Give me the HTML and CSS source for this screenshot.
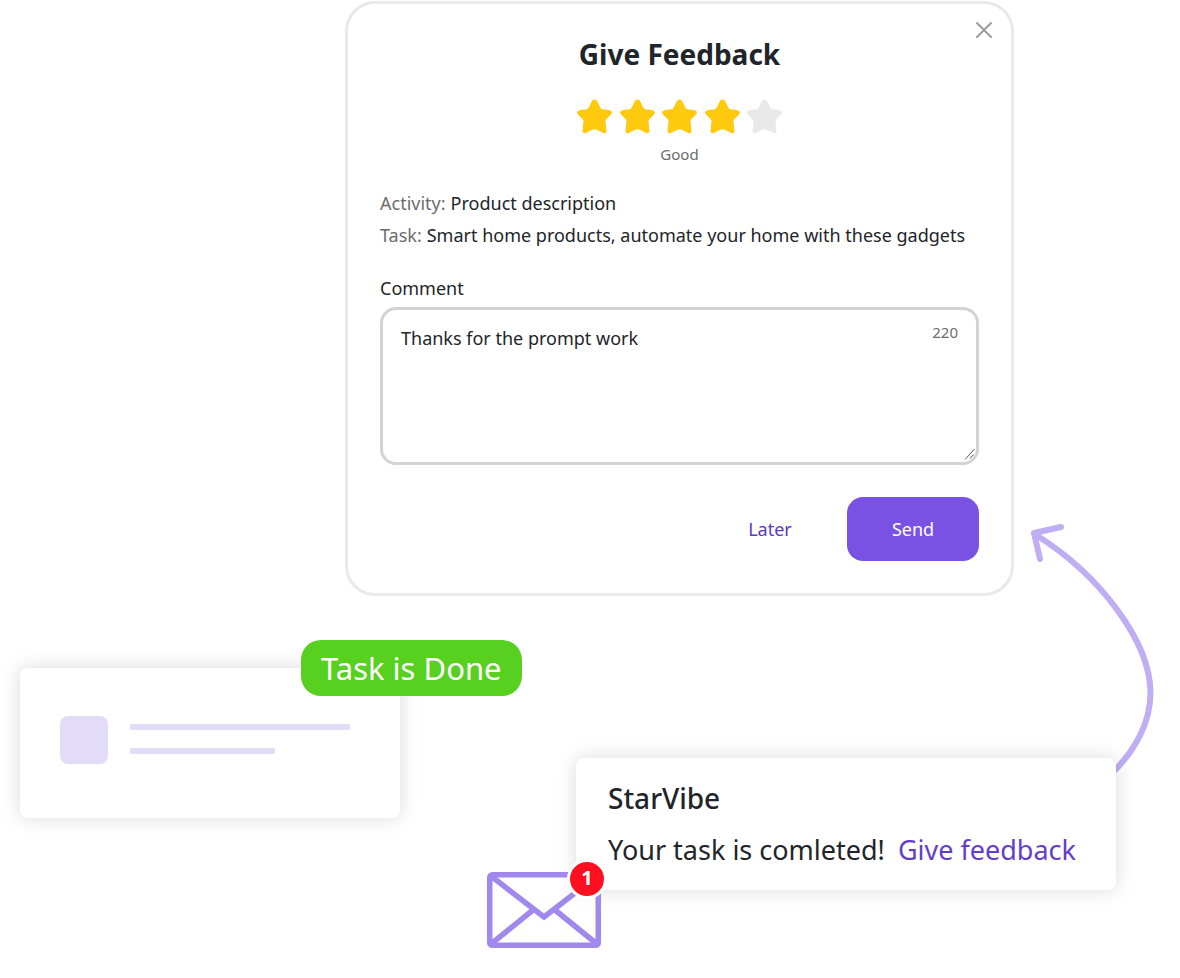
FILE: index.html
```html
<!DOCTYPE html>
<html lang="en">
<head>
<meta charset="utf-8">
<meta name="viewport" content="width=device-width, initial-scale=1">
<title>Give Feedback</title>
<link rel="stylesheet" href="styles.css">
</head>
<body>
<svg class="defs" aria-hidden="true">
  <symbol id="star" viewBox="0 0 35 35">
    <path d="M17.5 .5Q19.3 .5 20.3 2.500L23.6 8.900Q24.200 10 25.600 10.200L32.500 11.200Q36.400 12.200 34 15.400L29 20.600Q28.300 21.400 28.500 22.600L29.500 31.500Q29.500 35 26.300 34L19 30.600Q17.500 29.900 16 30.600L8.700 34Q5.500 35 5.500 31.500L6.500 22.600Q6.700 21.400 6 20.600L1 15.400Q-1.400 12.200 2.500 11.200L9.400 10.200Q10.800 10 11.400 8.900L14.700 2.500Q15.700 .5 17.500 .5Z"/>
  </symbol>
</svg>
<main class="scene">
  <section class="modal" role="dialog" aria-labelledby="modal-title">
    <button class="close" type="button" aria-label="Close">
      <svg viewBox="0 0 18 18" width="18" height="18"><path d="M2 2L16 16M16 2L2 16"/></svg>
    </button>
    <h1 class="modal-title" id="modal-title">Give Feedback</h1>
    <form class="form">
      <fieldset class="rating">
        <legend class="hidden">Rating</legend>
        <div class="stars">
          <label class="star on"><input class="hidden" type="radio" name="rating" aria-label="Terrible"><svg><use href="#star"/></svg></label>
          <label class="star on"><input class="hidden" type="radio" name="rating" aria-label="Poor"><svg><use href="#star"/></svg></label>
          <label class="star on"><input class="hidden" type="radio" name="rating" aria-label="Fair"><svg><use href="#star"/></svg></label>
          <label class="star on"><input class="hidden" type="radio" name="rating" aria-label="Good" checked><svg><use href="#star"/></svg></label>
          <label class="star"><input class="hidden" type="radio" name="rating" aria-label="Excellent"><svg><use href="#star"/></svg></label>
        </div>
        <p class="rating-text">Good</p>
      </fieldset>
      <dl class="details">
        <div class="detail"><dt>Activity:</dt><dd>Product description</dd></div>
        <div class="detail"><dt>Task:</dt><dd>Smart home products, automate your home with these gadgets</dd></div>
      </dl>
      <label class="field-label" for="comment">Comment</label>
      <div class="field">
        <textarea class="comment" id="comment">Thanks for the prompt work</textarea>
        <span class="counter">220</span>
        <svg class="grip" viewBox="0 0 12 12" width="12" height="12" aria-hidden="true"><path d="M1 11.500L10.500 1M6 10.500L9.500 6.500"/></svg>
      </div>
      <div class="actions">
        <button class="button" type="button">Later</button>
        <button class="button primary" type="submit">Send</button>
      </div>
    </form>
  </section>

  <div class="events">
    <article class="task">
      <span class="task-status">Task is Done</span>
      <span class="task-thumb"></span>
      <div class="task-lines">
        <span class="line"></span>
        <span class="line short"></span>
      </div>
    </article>

    <div class="notice-wrap">
      <svg class="arrow" viewBox="0 0 128 256" width="128" height="256" aria-hidden="true">
        <path d="M6 15C70 55 120.500 122 120.500 173C120.500 202 105 231 82 253M31 7L4 13L10 39"/>
      </svg>
      <article class="notice">
        <h2 class="notice-title">StarVibe</h2>
        <p class="notice-text">Your task is comleted! <a class="link" href="#modal-title">Give feedback</a></p>
      </article>
      <div class="mail">
        <svg viewBox="0 0 114 76" width="114" height="76" aria-hidden="true">
          <rect x="2.750" y="2.750" width="108.500" height="70.500" rx="2.500"/>
          <path d="M4 4L57 45L110 4M4 72L46 38M110 72L68 38"/>
        </svg>
        <span class="count">1</span>
      </div>
    </div>
  </div>
</main>
</body>
</html>
```
FILE: styles.css
```css
* {
  box-sizing: border-box;
}

body {
  margin: 0;
  background: #fff;
  color: #212529;
  font-family: "Noto Sans", "Open Sans", sans-serif;
  font-size: 18px;
  line-height: 32px;
}

h1, h2, p, dl, dd, fieldset {
  margin: 0;
  padding: 0;
  border: 0;
}

button, textarea {
  font: inherit;
  color: inherit;
}

.defs {
  display: none;
}

.hidden {
  position: absolute;
  width: 1px;
  height: 1px;
  margin: 0;
  overflow: hidden;
  opacity: 0;
}

.scene {
  padding: 1px 64px 88px 20px;
}

.modal {
  position: relative;
  max-width: 669px;
  margin: 0 102px 0 auto;
  padding: 32px;
  border: 3px solid #e9e9e9;
  border-radius: 30px;
}

.close {
  position: absolute;
  top: 17px;
  right: 18px;
  display: flex;
  padding: 0;
  border: 0;
  background: none;
}

.close svg {
  fill: none;
  stroke: #9c9c9c;
  stroke-width: 2;
  stroke-linecap: round;
}

.modal-title {
  font-size: 28px;
  font-weight: 700;
  line-height: 36px;
  text-align: center;
}

.rating {
  display: flex;
  flex-direction: column;
  align-items: center;
  margin-top: 27px;
}

.stars {
  display: flex;
  justify-content: space-between;
  width: 205px;
}

.star {
  position: relative;
  display: flex;
}

.star svg {
  width: 35px;
  height: 35px;
  fill: #e9e9e9;
}

.star.on svg {
  fill: #ffc90e;
}

.rating-text {
  margin-top: 8px;
  color: #6c6c6c;
  font-size: 15px;
  line-height: 24px;
}

.details {
  margin-top: 21px;
}

.detail {
  display: flex;
  gap: 5px;
}

.detail dt {
  color: #6c6c6c;
}

.field-label {
  display: block;
  margin-top: 21px;
}

.field {
  position: relative;
  margin-top: 3px;
}

.comment {
  display: block;
  width: 100%;
  height: 158px;
  padding: 12px 80px 12px 18px;
  border: 3px solid #d3d3d3;
  border-radius: 16px;
  background: #fff;
  outline: 0;
  resize: vertical;
}

.comment::-webkit-resizer {
  background: transparent;
}

.grip {
  position: absolute;
  right: 3px;
  bottom: 5px;
  fill: none;
  stroke: #555;
  stroke-width: 1;
  pointer-events: none;
}

.counter {
  position: absolute;
  top: 13px;
  right: 21px;
  color: #6c6c6c;
  font-size: 15px;
  line-height: 24px;
}

.actions {
  display: flex;
  justify-content: flex-end;
  gap: 11px;
  margin-top: 32px;
}

.button {
  width: 132px;
  height: 64px;
  padding: 0;
  border: 0;
  border-radius: 16px;
  background: none;
  color: #5b39bf;
}

.button.primary {
  background: #7952e3;
  color: #fff;
}

.events {
  display: flex;
  justify-content: space-between;
  align-items: flex-start;
  gap: 40px;
  padding-top: 72px;
}

.task {
  position: relative;
  display: flex;
  align-items: flex-start;
  gap: 22px;
  flex: 0 1 380px;
  padding: 48px 50px 54px 40px;
  border-radius: 8px;
  background: #fff;
  box-shadow: 0 0 20px rgba(0, 0, 0, 0.15);
}

.task-status {
  position: absolute;
  top: -28px;
  left: 281px;
  padding: 8px 20px;
  border-radius: 20px;
  background: #58d01f;
  color: #fff;
  font-size: 31px;
  line-height: 40px;
  white-space: nowrap;
}

.task-thumb {
  flex: none;
  width: 48px;
  height: 48px;
  border-radius: 8px;
  background: #e2dcf9;
}

.task-lines {
  display: flex;
  flex: 1;
  flex-direction: column;
  gap: 18px;
  padding-top: 8px;
}

.line {
  height: 6px;
  border-radius: 2px;
  background: #e2dcf9;
}

.line.short {
  width: 66%;
}

.notice-wrap {
  position: relative;
  flex: 0 1 540px;
  margin-top: 90px;
}

.arrow {
  position: absolute;
  right: -42px;
  bottom: 114px;
  fill: none;
  stroke: #bfaef3;
  stroke-width: 6;
  stroke-linecap: round;
  stroke-linejoin: round;
}

.notice {
  position: relative;
  padding: 20px 32px;
  border-radius: 8px;
  background: #fff;
  box-shadow: 0 0 20px rgba(0, 0, 0, 0.15);
}

.notice-title {
  font-size: 28px;
  font-weight: 500;
  line-height: 40px;
}

.notice-text {
  margin-top: 12px;
  font-size: 27px;
  line-height: 40px;
  white-space: nowrap;
}

.link {
  margin-left: 6px;
  color: #633ecb;
  text-decoration: none;
}

.mail {
  position: absolute;
  top: 114px;
  left: -89px;
  display: flex;
}

.mail svg {
  fill: none;
  stroke: #a188ec;
  stroke-width: 5.5;
}

.count {
  position: absolute;
  top: -13px;
  right: -6px;
  width: 40px;
  height: 40px;
  border: 3px solid #fff;
  border-radius: 50%;
  background: #ff0f1f;
  color: #fff;
  font-size: 20px;
  font-weight: 700;
  line-height: 32px;
  text-align: center;
}
```
